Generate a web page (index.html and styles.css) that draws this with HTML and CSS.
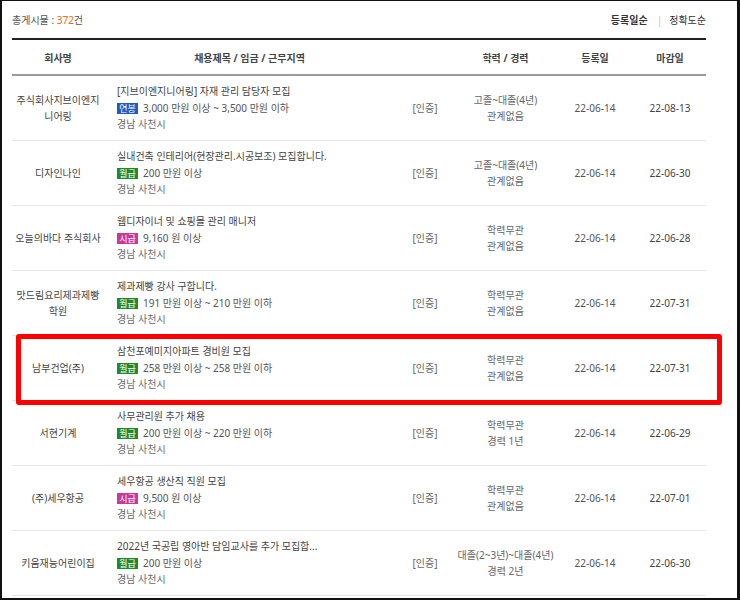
FILE: index.html
```html
<!DOCTYPE html>
<html lang="ko">
<head>
    <meta charset="UTF-8">
    <meta name="viewport" content="width=device-width, initial-scale=1.0">
    <title>채용정보 목록</title>
    <link rel="stylesheet" href="styles.css">
</head>
<body>

    <div class="frame">

        <!-- 상단: 게시물 수 / 정렬 -->
        <div class="board-top">
            <p class="total">총게시물 : <span class="count">372</span>건</p>
            <div class="sort">
                <a href="#" class="on">등록일순</a>
                <span class="bar">|</span>
                <a href="#">정확도순</a>
            </div>
        </div>

        <!-- 채용 목록 -->
        <table class="job-list">
            <colgroup>
                <col class="c-company">
                <col class="c-title">
                <col class="c-cert">
                <col class="c-edu">
                <col class="c-reg">
                <col class="c-due">
            </colgroup>
            <thead>
                <tr>
                    <th>회사명</th>
                    <th>채용제목 / 임금 / 근무지역</th>
                    <th></th>
                    <th>학력 / 경력</th>
                    <th>등록일</th>
                    <th>마감일</th>
                </tr>
            </thead>
            <tbody>
                <tr>
                    <td class="company">주식회사지브이엔지<br>니어링</td>
                    <td class="title">
                        <div class="subject">[지브이엔지니어링] 자재 관리 담당자 모집</div>
                        <div class="pay"><span class="badge year">연봉</span>3,000 만원 이상 ~ 3,500 만원 이하</div>
                        <div class="area">경남 사천시</div>
                    </td>
                    <td class="cert">[인증]</td>
                    <td class="edu">고졸~대졸(4년)<br>관계없음</td>
                    <td class="date">22-06-14</td>
                    <td class="date due">22-08-13</td>
                </tr>
                <tr>
                    <td class="company">디자인나인</td>
                    <td class="title">
                        <div class="subject">실내건축 인테리어(현장관리.시공보조) 모집합니다.</div>
                        <div class="pay"><span class="badge month">월급</span>200 만원 이상</div>
                        <div class="area">경남 사천시</div>
                    </td>
                    <td class="cert">[인증]</td>
                    <td class="edu">고졸~대졸(4년)<br>관계없음</td>
                    <td class="date">22-06-14</td>
                    <td class="date due">22-06-30</td>
                </tr>
                <tr>
                    <td class="company">오늘의바다 주식회사</td>
                    <td class="title">
                        <div class="subject">웹디자이너 및 쇼핑몰 관리 매니저</div>
                        <div class="pay"><span class="badge hour">시급</span>9,160 원 이상</div>
                        <div class="area">경남 사천시</div>
                    </td>
                    <td class="cert">[인증]</td>
                    <td class="edu">학력무관<br>관계없음</td>
                    <td class="date">22-06-14</td>
                    <td class="date due">22-06-28</td>
                </tr>
                <tr>
                    <td class="company">맛드림요리제과제빵<br>학원</td>
                    <td class="title">
                        <div class="subject">제과제빵 강사 구합니다.</div>
                        <div class="pay"><span class="badge month">월급</span>191 만원 이상 ~ 210 만원 이하</div>
                        <div class="area">경남 사천시</div>
                    </td>
                    <td class="cert">[인증]</td>
                    <td class="edu">학력무관<br>관계없음</td>
                    <td class="date">22-06-14</td>
                    <td class="date due">22-07-31</td>
                </tr>
                <tr>
                    <td class="company">남부건업(주)</td>
                    <td class="title">
                        <div class="subject">삼천포예미지아파트 경비원 모집</div>
                        <div class="pay"><span class="badge month">월급</span>258 만원 이상 ~ 258 만원 이하</div>
                        <div class="area">경남 사천시</div>
                    </td>
                    <td class="cert">[인증]</td>
                    <td class="edu">학력무관<br>관계없음</td>
                    <td class="date">22-06-14</td>
                    <td class="date due">22-07-31</td>
                </tr>
                <tr>
                    <td class="company">서현기계</td>
                    <td class="title">
                        <div class="subject">사무관리원 추가 채용</div>
                        <div class="pay"><span class="badge month">월급</span>200 만원 이상 ~ 220 만원 이하</div>
                        <div class="area">경남 사천시</div>
                    </td>
                    <td class="cert">[인증]</td>
                    <td class="edu">학력무관<br>경력 1년</td>
                    <td class="date">22-06-14</td>
                    <td class="date due">22-06-29</td>
                </tr>
                <tr>
                    <td class="company">(주)세우항공</td>
                    <td class="title">
                        <div class="subject">세우항공 생산직 직원 모집</div>
                        <div class="pay"><span class="badge hour">시급</span>9,500 원 이상</div>
                        <div class="area">경남 사천시</div>
                    </td>
                    <td class="cert">[인증]</td>
                    <td class="edu">학력무관<br>관계없음</td>
                    <td class="date">22-06-14</td>
                    <td class="date due">22-07-01</td>
                </tr>
                <tr>
                    <td class="company">키움재능어린이집</td>
                    <td class="title">
                        <div class="subject">2022년 국공립 영아반 담임교사를 추가 모집합...</div>
                        <div class="pay"><span class="badge month">월급</span>200 만원 이상</div>
                        <div class="area">경남 사천시</div>
                    </td>
                    <td class="cert">[인증]</td>
                    <td class="edu">대졸(2~3년)~대졸(4년)<br>경력 2년</td>
                    <td class="date">22-06-14</td>
                    <td class="date due">22-06-30</td>
                </tr>
            </tbody>
        </table>

        <!-- 강조 표시 -->
        <div class="highlight"></div>

    </div>

</body>
</html>
```

FILE: styles.css
```css
/* 기본 */
body {
    margin: 0;
    padding: 0;
    background-color: #ffffff;
    font-family: "Noto Sans", "Noto Sans CJK KR", sans-serif;
    font-size: 10px;
    color: #555555;
}

/* 캡처 테두리 */
.frame {
    position: relative;
    width: 740px;
    height: 600px;
    box-sizing: border-box;
    border: solid #111111;
    border-width: 1px 3px 2px 2px;
    padding: 0 31px 0 10px;
    overflow: hidden;
}

/* 상단 */
.board-top {
    display: flex;
    align-items: center;
    justify-content: space-between;
    height: 37px;
}

.total {
    margin: 0;
    color: #555555;
}

.total .count {
    color: #ec6a24;
}

.sort {
    display: flex;
    align-items: center;
}

.sort a {
    color: #333333;
    text-decoration: none;
}

.sort a.on {
    color: #333333;
    font-weight: bold;
}

.sort .bar {
    color: #c4c4c4;
    margin: 0 7px 0 9px;
}

/* 목록 테이블 */
.job-list {
    width: 694px;
    border-collapse: collapse;
    table-layout: fixed;
    border-top: 2px solid #222222;
}

.c-company { width: 92px; }
.c-title { width: 291px; }
.c-cert { width: 60px; }
.c-edu { width: 101px; }
.c-reg { width: 78px; }
.c-due { width: 72px; }

.job-list th {
    height: 34px;
    padding: 0;
    font-weight: bold;
    color: #444444;
    text-align: center;
    border-bottom: 2px solid #9a9a9a;
}

.job-list td {
    height: 64px;
    padding: 0;
    text-align: center;
    vertical-align: middle;
    border-bottom: 1px solid #e6e6e6;
    line-height: 16px;
}

.job-list td.company {
    color: #444444;
    white-space: nowrap;
}

.job-list td.title {
    text-align: left;
    padding-left: 13px;
    white-space: nowrap;
    line-height: 16.5px;
}

.subject {
    color: #444444;
}

.pay {
    display: flex;
    align-items: center;
    color: #555555;
}

.area {
    color: #6a6a6a;
}

/* 임금 구분 뱃지 */
.badge {
    display: inline-block;
    width: 21px;
    height: 11px;
    line-height: 11px;
    margin-right: 5px;
    font-size: 9px;
    color: #ffffff;
    text-align: center;
}

.badge.year { background-color: #1f5cbc; }
.badge.month { background-color: #1f8a2b; }
.badge.hour { background-color: #c53a9b; }

.job-list td.cert {
    color: #666666;
}

.job-list td.edu {
    color: #666666;
    white-space: nowrap;
}

.job-list td.date {
    color: #555555;
}

.job-list td.due {
    color: #444444;
}

/* 빨간 강조 박스 */
.highlight {
    position: absolute;
    left: 14px;
    top: 333px;
    width: 706px;
    height: 71px;
    box-sizing: border-box;
    border: 5px solid #ff0000;
    border-radius: 3px;
}
```
